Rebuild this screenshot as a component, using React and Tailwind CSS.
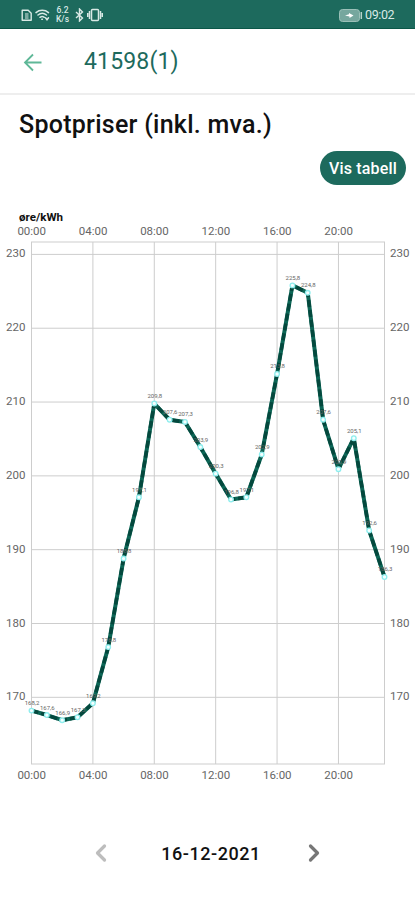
import { ChevronLeft, ChevronRight } from 'lucide-react';

const prices = [
  168.2, 167.6, 166.9, 167.3, 169.2, 176.8, 188.8, 197.1, 209.8, 207.6, 207.3, 203.9,
  200.3, 196.8, 197.1, 202.9, 213.8, 225.8, 224.8, 207.6, 200.9, 205.1, 192.6, 186.3,
];

const hourTicks = [0, 4, 8, 12, 16, 20];
const priceTicks = [230, 220, 210, 200, 190, 180, 170];

const CHART = { left: 31.5, right: 384.5, top: 32, bottom: 554 };

const xFor = (hour) => CHART.left + (hour * (CHART.right - CHART.left)) / 23;
const yFor = (price) => 44.4 + (230 - price) * 7.382;
const formatHour = (hour) => `${String(hour).padStart(2, '0')}:00`;
const formatPrice = (price) => price.toFixed(1).replace('.', ',');

const StatusBar = () => (
  <div className="flex h-[29px] items-center justify-between border-b border-[#0b5748] bg-[#1d6a5d] pt-[2px] pr-[20px] pl-[21px] text-[#d9e9e5]">
    <div className="flex items-center">
      <svg width="12" height="14" viewBox="0 0 12 14" fill="none" stroke="currentColor" strokeWidth="1.4">
        <path d="M1.2 2.2h6l3 3v7h-9z" strokeLinejoin="round" />
        <path d="M4 6h3.5M4 8h3.5M4 10h3.5" strokeWidth="1" />
      </svg>
      <svg className="ml-[2px]" width="15" height="14" viewBox="0 0 15 14" fill="none" stroke="currentColor" strokeWidth="1.5" strokeLinecap="round">
        <path d="M1 4.6c3.5-3 9-3 12.5 0M3 7c2.5-2 6-2 8.500 0M5 9.300c1.400-1 3-1 4.300 0" />
        <path d="M6.800 11.300h.6M10.500 9.800l1.500 2 1.500-2" />
      </svg>
      <div className="ml-[5px] flex w-[15px] flex-col text-center text-[8.5px] leading-[9.5px] font-medium">
        <span>6.2</span>
        <span>K/s</span>
      </div>
      <svg className="ml-[5px]" width="9" height="14" viewBox="0 0 9 14" fill="none" stroke="currentColor" strokeWidth="1.4">
        <path d="M1 4l6.5 6L4.5 13V1l3 3L1 10" />
      </svg>
      <svg className="ml-[3px]" width="16" height="14" viewBox="0 0 16 14" fill="none" stroke="currentColor" strokeWidth="1.5">
        <rect x="4.5" y="1.5" width="7" height="11" rx="1" />
        <path d="M2.5 3v8M13.5 3v8M.7 5v4M15.3 5v4" />
      </svg>
    </div>
    <div className="flex items-center">
      <svg width="24" height="13" viewBox="0 0 24 13">
        <rect x="0.5" y="0.5" width="20" height="12" rx="3" fill="#76a79e" stroke="#9bc0b8" />
        <path d="M6 6.5l4-1.2V4l4.5 2.5L10.5 9V7.500z" fill="#fff" />
        <path d="M22.3 3v7" stroke="#b7d2cc" strokeWidth="1.5" />
      </svg>
      <span className="ml-[2px] w-[30px] text-[12.5px] tracking-[-0.4px] whitespace-nowrap">09:02</span>
    </div>
  </div>
);

const PriceChart = () => {
  const line = prices.map((price, hour) => `${xFor(hour)},${yFor(price)}`).join(' ');

  return (
    <svg className="block" width="415" height="580" viewBox="0 0 415 580">
      <text x="19" y="10.5" fontSize="10" fontWeight="700" fill="#111" textLength="44" lengthAdjust="spacingAndGlyphs">
        øre/kWh
      </text>

      {/* Grid */}
      <g stroke="#cdcdcd" strokeWidth="1">
        {priceTicks.map((price) => (
          <line key={price} x1={CHART.left} x2={CHART.right} y1={yFor(price)} y2={yFor(price)} />
        ))}
        {hourTicks.map((hour) => (
          <line key={hour} x1={xFor(hour)} x2={xFor(hour)} y1={CHART.top} y2={CHART.bottom} />
        ))}
        <rect
          x={CHART.left}
          y={CHART.top}
          width={CHART.right - CHART.left}
          height={CHART.bottom - CHART.top}
          fill="none"
        />
      </g>

      {/* Axis labels */}
      <g fontSize="11.5" fill="#666">
        {hourTicks.map((hour) => (
          <g key={hour} textAnchor="middle">
            <text x={xFor(hour) + 0.2} y="24.5">{formatHour(hour)}</text>
            <text x={xFor(hour) + 0.2} y="569">{formatHour(hour)}</text>
          </g>
        ))}
        {priceTicks.map((price) => (
          <g key={price}>
            <text x="25.5" y={yFor(price) + 3} textAnchor="end">{price}</text>
            <text x="390" y={yFor(price) + 3}>{price}</text>
          </g>
        ))}
      </g>

      <g fill="none" strokeLinejoin="bevel">
        <polyline points={line} stroke="#0c6656" strokeWidth="4" />
        <polyline points={line} stroke="#04483d" strokeWidth="3.5" strokeDasharray="7 3" />
      </g>

      {prices.map((price, hour) => (
        <circle key={hour} cx={xFor(hour)} cy={yFor(price)} r="2.3" fill="#f4ffff" stroke="#8eeeee" strokeWidth="1.3" />
      ))}
      <g fontSize="6" fill="#666" textAnchor="middle">
        {prices.map((price, hour) => (
          <text key={hour} x={xFor(hour) + 0.5} y={yFor(price) - 5.5}>{formatPrice(price)}</text>
        ))}
      </g>
    </svg>
  );
};

const App = () => (
  <div className="flex h-[900px] w-[415px] flex-col overflow-hidden bg-white font-['Roboto',sans-serif]">
    <StatusBar />
    <header className="flex h-[66px] items-center border-b-2 border-[#eeeeee] pt-[3px] pl-[23px] text-[#1d6a5d]">
      <svg width="20" height="20" viewBox="0 0 20 20" fill="none" stroke="#5fb898" strokeWidth="1.8">
        <path d="M18.5 9.500H2M10 1.500L2 9.500l8 8" />
      </svg>
      <span className="ml-[41px] text-[23px] tracking-[0.15px]">41598(1)</span>
    </header>

    <main className="flex flex-col">
      <h1 className="mt-[12px] ml-[19px] h-[36px] text-[25px] leading-[35px] font-medium tracking-[0.26px] whitespace-nowrap text-[#111]">
        Spotpriser (inkl. mva.)
      </h1>
      <button className="mt-[8px] mr-[9px] h-[34px] w-[86px] self-end rounded-full bg-[#1d6a5d] pt-[2px] text-[16px] font-medium tracking-[0.15px] whitespace-nowrap text-white">
        Vis tabell
      </button>
      <div className="mt-[25px]">
        <PriceChart />
      </div>
      <div className="mt-[45px] flex h-[36px] items-center pl-[87px]">
        <ChevronLeft className="text-[#bdbdbd]" size={28} strokeWidth={2.8} />
        <span className="mr-[39px] ml-[46px] w-[100px] text-center text-[18px] font-medium tracking-[0.55px] whitespace-nowrap text-[#111]">
          16-12-2021
        </span>
        <ChevronRight className="text-[#777]" size={28} strokeWidth={2.8} />
      </div>
    </main>
  </div>
);

export default App;
